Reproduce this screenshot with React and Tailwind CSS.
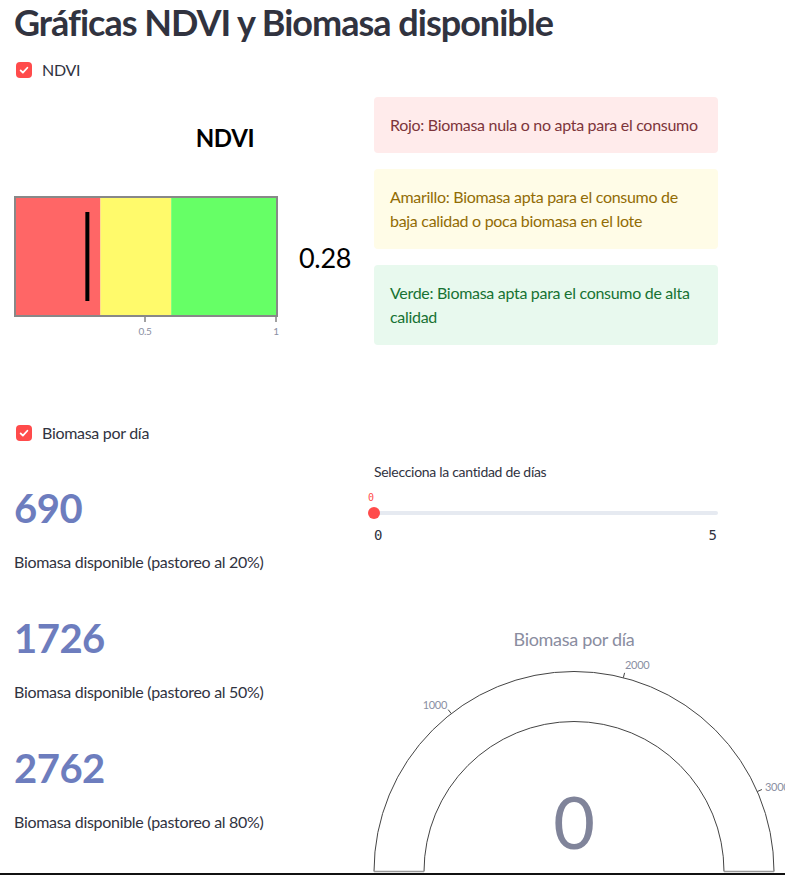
import React from 'react';

const CheckBox = ({ label }) => (
  <label className="flex items-center gap-[10px] text-[16px] leading-6 text-[#31333F]">
    <span className="flex h-4 w-4 items-center justify-center rounded-[4px] bg-[#FF4B4B]">
      <svg viewBox="0 0 16 16" className="h-3 w-3" fill="none" stroke="white" strokeWidth="2.4" strokeLinecap="round" strokeLinejoin="round">
        <path d="M3.5 8.5l3 3 6-6.5" />
      </svg>
    </span>
    {label}
  </label>
);

const Alert = ({ tone, children }) => {
  const styles = {
    red: 'bg-[#FFEBEB] text-[#7D353B]',
    yellow: 'bg-[#FFFCE7] text-[#926C05]',
    green: 'bg-[#E8F9EE] text-[#177233]',
  };
  return (
    <div className={`rounded-[4px] px-4 py-4 text-[16px] leading-6 ${styles[tone]}`}>{children}</div>
  );
};

// bullet chart for NDVI
const NdviChart = ({ value = 0.28 }) => {
  const w = 262;
  const sx = (v) => v * w;
  return (
    <svg width="344" height="260" className="block overflow-visible">
      <text x="211" y="50" textAnchor="middle" fontSize="24" fontWeight="700" fill="#000">NDVI</text>
      <rect x={sx(0)} y="99" width={sx(0.33)} height="121" fill="#FF6666" />
      <rect x={sx(0.33)} y="99" width={sx(0.6) - sx(0.33)} height="121" fill="#FFFA6B" />
      <rect x={sx(0.6)} y="99" width={sx(1) - sx(0.6)} height="121" fill="#66FF66" />
      <rect x="1" y="100" width="262" height="119" fill="none" stroke="#888" strokeWidth="2" />
      <line x1={sx(value)} x2={sx(value)} y1="115" y2="204" stroke="#000" strokeWidth="4" />
      {[0.5, 1].map((t) => (
        <g key={t}>
          <line x1={sx(t)} x2={sx(t)} y1="220" y2="225" stroke="#444" strokeWidth="1" />
          <text x={sx(t)} y="238" textAnchor="middle" fontSize="10" fill="#8A8FA3">{t}</text>
        </g>
      ))}
      <text x="285" y="171" fontSize="27" fill="#000">{value}</text>
    </svg>
  );
};

const Gauge = ({ value = 0, max = 3452 }) => {
  const cx = 200;
  const cy = 251.5;
  const R = 200;
  const r = 150;
  const ticks = [
    { v: 1000, lx: 73, ly: 89, anchor: 'end' },
    { v: 2000, lx: 251, ly: 49, anchor: 'start' },
    { v: 3000, lx: 391, ly: 171, anchor: 'start' },
  ];
  return (
    <svg width="411" height="256" className="block overflow-visible">
      <text x="200" y="26" textAnchor="middle" fontSize="18" fill="#8A8D9F">Biomasa por día</text>
      <path
        d={`M ${cx - R} ${cy} A ${R} ${R} 0 0 1 ${cx + R} ${cy} L ${cx + r} ${cy} A ${r} ${r} 0 0 0 ${cx - r} ${cy} Z`}
        fill="#fff"
        stroke="#444"
        strokeWidth="1"
      />
      <line x1={cx - R} x2={cx - r} y1={cy} y2={cy} stroke="#999" strokeWidth="1.5" />
      <line x1={cx + r} x2={cx + R} y1={cy} y2={cy} stroke="#999" strokeWidth="1.5" />
      {ticks.map((t) => {
        const a = Math.PI * (1 - t.v / max);
        const x1 = cx + R * Math.cos(a);
        const y1 = cy - R * Math.sin(a);
        const x2 = cx + (R + 5) * Math.cos(a);
        const y2 = cy - (R + 5) * Math.sin(a);
        return (
          <g key={t.v}>
            <line x1={x1} y1={y1} x2={x2} y2={y2} stroke="#444" strokeWidth="1" />
            <text x={t.lx} y={t.ly} textAnchor={t.anchor} fontSize="11" fill="#8A8FA3">{t.v}</text>
          </g>
        );
      })}
      <text x="200" y="229" textAnchor="middle" fontSize="72" fill="#80849A">{value}</text>
    </svg>
  );
};

const Metric = ({ value, label }) => (
  <div>
    <div className="text-[40px] font-bold leading-[48px] tracking-[-0.5px] text-[#6D7DBE]">{value}</div>
    <div className="mt-[18px] text-[16px] leading-6 text-[#31333F]">{label}</div>
  </div>
);

export default function App() {
  return (
    <div className="relative h-[875px] w-[785px] overflow-hidden border-b-2 border-[#111] bg-white font-[Lato,sans-serif] tracking-[-0.3px]">
      <div className="ml-[14px] w-[704px]">
        <h1 className="text-[36px] font-bold leading-[44px] tracking-[-1px] text-[#31333F]">Gráficas NDVI y Biomasa disponible</h1>

        <div className="mt-[14px] pl-[2px]">
          <CheckBox label="NDVI" />
        </div>

        <div className="mt-[15px] grid grid-cols-2 gap-4">
          <NdviChart value={0.28} />
          <div className="flex flex-col gap-4">
            <Alert tone="red">Rojo: Biomasa nula o no apta para el consumo</Alert>
            <Alert tone="yellow">Amarillo: Biomasa apta para el consumo de baja calidad o poca biomasa en el lote</Alert>
            <Alert tone="green">Verde: Biomasa apta para el consumo de alta calidad</Alert>
          </div>
        </div>

        <div className="mt-[64px] pl-[2px]">
          <CheckBox label="Biomasa por día" />
        </div>

        <div className="mt-[17px] grid grid-cols-2 gap-4">
          <div className="flex flex-col gap-[40px] pt-[22px]">
            <Metric value="690" label="Biomasa disponible (pastoreo al 20%)" />
            <Metric value="1726" label="Biomasa disponible (pastoreo al 50%)" />
            <Metric value="2762" label="Biomasa disponible (pastoreo al 80%)" />
          </div>
          <div>
            <div className="text-[14px] leading-5 text-[#31333F]">Selecciona la cantidad de días</div>
            <div className="relative mt-[29px] h-1 rounded-full bg-[#E6EAF1]">
              <span className="absolute -top-[19px] -left-[3px] -translate-x-1/2 font-['DejaVu_Sans_Mono',monospace] text-[10px] leading-3 tracking-normal text-[#FF4B4B]">0</span>
              <span className="absolute -left-[6px] -top-[4px] h-3 w-3 rounded-full bg-[#FF4B4B]" />
            </div>
            <div className="mt-[10px] flex justify-between pr-[1px] font-['DejaVu_Sans_Mono',monospace] text-[14px] leading-5 tracking-normal text-[#31333F]">
              <span>0</span>
              <span>5</span>
            </div>
            <div className="mt-[75px]">
              <Gauge value={0} max={3452} />
            </div>
          </div>
        </div>
      </div>
    </div>
  );
}
